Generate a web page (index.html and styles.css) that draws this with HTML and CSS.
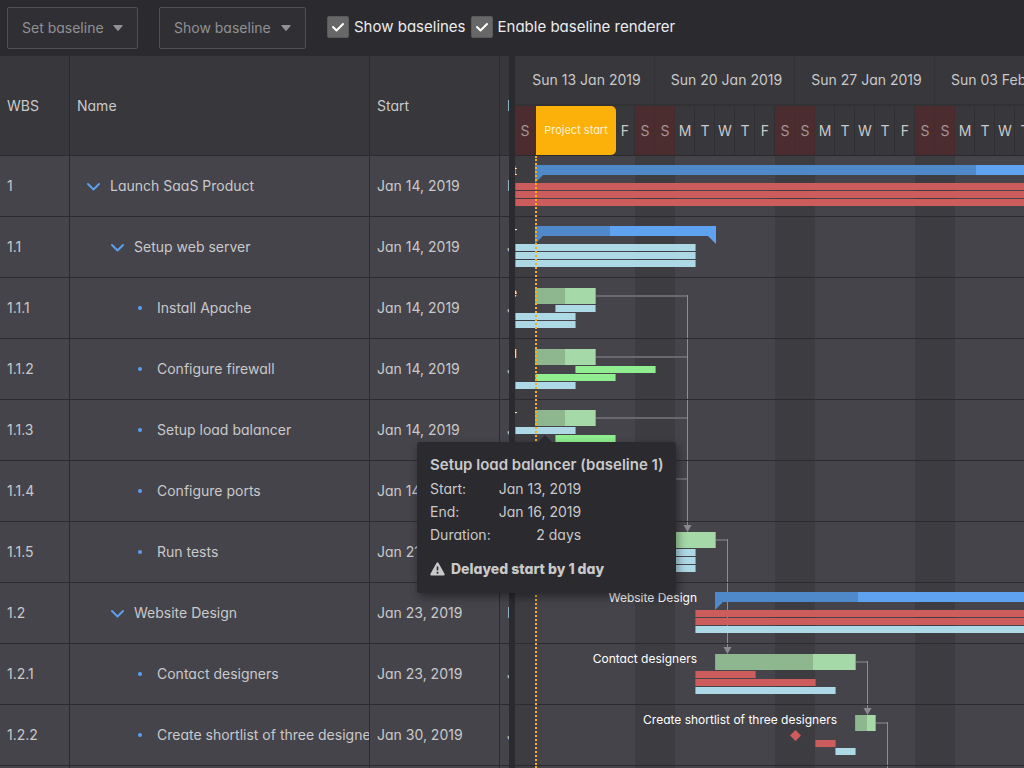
FILE: index.html
```html
<!DOCTYPE html>
<html lang="en">
<head>
<meta charset="utf-8">
<meta name="viewport" content="width=device-width, initial-scale=1">
<title>Gantt baselines</title>
<link rel="stylesheet" href="styles.css">
</head>
<body>
<header class="toolbar">
  <button class="btn" type="button">Set baseline <svg class="caret" viewBox="0 0 10 6" aria-hidden="true"><path d="M1 0h8q1 0 .5 1L5.700 5.500q-.7.700-1.400 0L.5 1Q0 0 1 0z"/></svg></button>
  <button class="btn btn-wide" type="button">Show baseline <svg class="caret" viewBox="0 0 10 6" aria-hidden="true"><path d="M1 0h8q1 0 .5 1L5.700 5.500q-.7.700-1.400 0L.5 1Q0 0 1 0z"/></svg></button>
  <div class="checks">
    <label class="check"><input type="checkbox" checked><svg class="tick" viewBox="0 0 22 22" aria-hidden="true"><path d="M6 11l3.500 3.500L16 8"/></svg><span>Show baselines</span></label>
    <label class="check"><input type="checkbox" checked><svg class="tick" viewBox="0 0 22 22" aria-hidden="true"><path d="M6 11l3.500 3.500L16 8"/></svg><span>Enable baseline renderer</span></label>
  </div>
</header>

<main class="gantt">
  <section class="grid-pane">
    <table class="grid">
      <colgroup><col class="col-wbs"><col class="col-name"><col class="col-date"><col class="col-date"></colgroup>
      <thead><tr><th>WBS</th><th>Name</th><th>Start</th><th>End</th></tr></thead>
      <tbody>
        <tr><td>1</td><td><div class="node l1"><svg class="chev" viewBox="0 0 16 16" aria-hidden="true"><path d="M2 6l5.500 5.500L13 6"/></svg>Launch SaaS Product</div></td><td>Jan 14, 2019</td><td>Mar 05, 2019</td></tr>
        <tr><td>1.1</td><td><div class="node l2"><svg class="chev" viewBox="0 0 16 16" aria-hidden="true"><path d="M2 6l5.500 5.500L13 6"/></svg>Setup web server</div></td><td>Jan 14, 2019</td><td>Jan 23, 2019</td></tr>
        <tr><td>1.1.1</td><td><div class="node l3"><i class="dot"></i>Install Apache</div></td><td>Jan 14, 2019</td><td>Jan 17, 2019</td></tr>
        <tr><td>1.1.2</td><td><div class="node l3"><i class="dot"></i>Configure firewall</div></td><td>Jan 14, 2019</td><td>Jan 17, 2019</td></tr>
        <tr><td>1.1.3</td><td><div class="node l3"><i class="dot"></i>Setup load balancer</div></td><td>Jan 14, 2019</td><td>Jan 17, 2019</td></tr>
        <tr><td>1.1.4</td><td><div class="node l3"><i class="dot"></i>Configure ports</div></td><td>Jan 14, 2019</td><td>Jan 16, 2019</td></tr>
        <tr><td>1.1.5</td><td><div class="node l3"><i class="dot"></i>Run tests</div></td><td>Jan 21, 2019</td><td>Jan 23, 2019</td></tr>
        <tr><td>1.2</td><td><div class="node l2"><svg class="chev" viewBox="0 0 16 16" aria-hidden="true"><path d="M2 6l5.500 5.500L13 6"/></svg>Website Design</div></td><td>Jan 23, 2019</td><td>Feb 13, 2019</td></tr>
        <tr><td>1.2.1</td><td><div class="node l3"><i class="dot"></i>Contact designers</div></td><td>Jan 23, 2019</td><td>Jan 30, 2019</td></tr>
        <tr><td>1.2.2</td><td><div class="node l3"><i class="dot"></i>Create shortlist of three designers</div></td><td>Jan 30, 2019</td><td>Jan 31, 2019</td></tr>
        <tr><td></td><td></td><td></td><td></td></tr>
      </tbody>
    </table>
  </section>

  <div class="splitter"></div>

  <section class="timeline">
    <div class="time-head">
      <div class="weeks"><span>Sun 13 Jan 2019</span><span>Sun 20 Jan 2019</span><span>Sun 27 Jan 2019</span><span>Sun 03 Feb 2019</span></div>
      <div class="days">
        <b>S</b><span>M</span><span>T</span><span>W</span><span>T</span><span>F</span><b>S</b>
        <b>S</b><span>M</span><span>T</span><span>W</span><span>T</span><span>F</span><b>S</b>
        <b>S</b><span>M</span><span>T</span><span>W</span><span>T</span><span>F</span><b>S</b>
        <b>S</b><span>M</span><span>T</span><span>W</span><span>T</span><span>F</span><b>S</b>
      </div>
      <div class="marker">Project start</div>
    </div>
    <div class="time-body">
      <svg class="links" width="600" height="620" aria-hidden="true">
        <path class="h" d="M80 140h93M80 201h93M80 262h93M80 323h93M200 384h13M340 506h13M360 567h13"/>
        <path class="v" d="M172.500 139v232M212.500 383v110M352.500 505v49M372.500 566v54"/>
        <path class="head" d="M168.500 369h8l-4 7zM208.500 491h8l-4 7zM348.500 552h8l-4 7z"/>
      </svg>
      <div class="row">
        <span class="label" style="--s:1">Launch SaaS Product</span>
        <div class="bar parent" style="--s:1;--d:50;--p:441px"></div>
        <div class="base b1 late" style="--s:0;--d:50"></div><div class="base b2 late" style="--s:0;--d:50"></div><div class="base b3 late" style="--s:0;--d:50"></div>
      </div>
      <div class="row">
        <span class="label" style="--s:1">Setup web server</span>
        <div class="bar parent" style="--s:1;--d:9;--p:75px"></div>
        <div class="base b1" style="--s:0;--d:9"></div><div class="base b2" style="--s:0;--d:9"></div><div class="base b3" style="--s:0;--d:9"></div>
      </div>
      <div class="row">
        <span class="label" style="--s:1">Install Apache</span>
        <div class="bar task" style="--s:1;--d:3;--p:30px"></div>
        <div class="base b1" style="--s:2;--d:2"></div><div class="base b2" style="--s:0;--d:3"></div><div class="base b3" style="--s:0;--d:3"></div>
      </div>
      <div class="row">
        <span class="label" style="--s:1">Configure firewall</span>
        <div class="bar task" style="--s:1;--d:3;--p:30px"></div>
        <div class="base b1 early" style="--s:3;--d:4"></div><div class="base b2 early" style="--s:1;--d:4"></div><div class="base b3" style="--s:0;--d:3"></div>
      </div>
      <div class="row">
        <span class="label" style="--s:1">Setup load balancer</span>
        <div class="bar task" style="--s:1;--d:3;--p:30px"></div>
        <div class="base b1" style="--s:0;--d:3"></div><div class="base b2 early" style="--s:2;--d:3"></div>
      </div>
      <div class="row">
        <div class="bar task" style="--s:1;--d:2;--p:20px"></div>
      </div>
      <div class="row">
        <div class="bar task" style="--s:7;--d:3;--p:0px"></div>
        <div class="base b1" style="--s:7;--d:2"></div><div class="base b2" style="--s:7;--d:2"></div><div class="base b3" style="--s:7;--d:2"></div>
      </div>
      <div class="row">
        <span class="label" style="--s:10">Website Design</span>
        <div class="bar parent" style="--s:10;--d:21;--p:143px"></div>
        <div class="base b1 late" style="--s:9;--d:21"></div><div class="base b2 late" style="--s:9;--d:21"></div><div class="base b3" style="--s:9;--d:21"></div>
      </div>
      <div class="row">
        <span class="label" style="--s:10">Contact designers</span>
        <div class="bar task" style="--s:10;--d:7;--p:98px"></div>
        <div class="base b1 late" style="--s:9;--d:3"></div><div class="base b2 late" style="--s:9;--d:6"></div><div class="base b3" style="--s:9;--d:7"></div>
      </div>
      <div class="row">
        <span class="label" style="--s:17">Create shortlist of three designers</span>
        <div class="bar task" style="--s:17;--d:1;--p:12px"></div>
        <div class="milestone" style="--s:14"></div><div class="base b2 late" style="--s:15;--d:1"></div><div class="base b3" style="--s:16;--d:1"></div>
      </div>
      <div class="start-line"></div>
    </div>
  </section>

  <aside class="tooltip" role="tooltip">
    <strong class="tip-title">Setup load balancer (baseline 1)</strong>
    <dl class="tip-data">
      <dt>Start:</dt><dd>Jan 13, 2019</dd>
      <dt>End:</dt><dd>Jan 16, 2019</dd>
      <dt>Duration:</dt><dd>2 days</dd>
    </dl>
    <strong class="tip-warn"><svg class="warn" viewBox="0 0 15 14" aria-hidden="true"><path d="M6.500 1q1-1.500 2 0l6 10.800q.7 1.500-1 1.700h-12q-1.700-.2-1-1.700z" fill="#c9c9ca"/><path d="M7.500 4.500v4" stroke="#2b2a2f" stroke-width="1.600"/><circle cx="7.500" cy="10.700" r="1" fill="#2b2a2f"/></svg>Delayed start by 1 day</strong>
  </aside>
</main>
</body>
</html>
```

FILE: styles.css
```css
* { box-sizing: border-box; }

body {
  margin: 0;
  height: 100vh;
  display: flex;
  flex-direction: column;
  overflow: hidden;
  background: #45444a;
  color: #c9c9ca;
  font: 400 14px/20px Inter, "Noto Sans", sans-serif;
  font-feature-settings: "cv11";
}

/* Toolbar */
.toolbar {
  flex: none;
  display: flex;
  align-items: center;
  gap: 21px;
  height: 56px;
  padding: 0 7px;
  background: #2b2a2f;
}
.btn {
  display: flex;
  align-items: center;
  justify-content: space-between;
  gap: 7px;
  min-width: 131px;
  height: 42px;
  padding: 0 14px;
  border: 1px solid #4f4e53;
  border-radius: 2px;
  background: #302f34;
  color: #919193;
  font: inherit;
  font-feature-settings: inherit;
  white-space: nowrap;
}
.btn-wide { min-width: 147px; }
.caret { width: 10px; height: 6px; fill: #919193; }
.checks { display: flex; gap: 5px; padding-bottom: 2px; font-size: 15px; }
.check {
  position: relative;
  display: flex;
  align-items: center;
  gap: 5px;
  color: #ececec;
  white-space: nowrap;
}
.check input {
  appearance: none;
  width: 22px;
  height: 22px;
  margin: 0;
  border: 1px solid #5a5a5c;
  border-radius: 2px;
  background: #676768;
}
.tick {
  position: absolute;
  left: 0;
  width: 22px;
  height: 22px;
  fill: none;
  stroke: #fff;
  stroke-width: 2;
  stroke-linecap: round;
  stroke-linejoin: round;
  visibility: hidden;
}
.check input:checked + .tick { visibility: visible; }

/* Split view */
.gantt { position: relative; flex: 1; min-height: 0; display: flex; }
.grid-pane { flex: 0 0 509px; overflow: hidden; }
.splitter { flex: 0 0 6px; background: #2b2a2f; }
.timeline { flex: 1; min-width: 0; display: flex; flex-direction: column; overflow: hidden; }

/* Grid */
.grid { width: 630px; table-layout: fixed; border-spacing: 0; }
.col-wbs { width: 70px; }
.col-name { width: 300px; }
.col-date { width: 130px; }
.grid th, .grid td {
  height: 61px;
  padding: 0 0 0 7px;
  border: solid #2b2a2f;
  border-width: 0 1px 1px 0;
  text-align: left;
  font-weight: 400;
  white-space: nowrap;
  overflow: hidden;
}
.grid th { height: 100px; background: #38373b; }
.node { display: flex; align-items: center; gap: 8px; }
.l1 { padding-left: 9px; }
.l2 { padding-left: 33px; }
.l3 { padding-left: 56px; }
.chev { flex: none; width: 16px; height: 16px; fill: none; stroke: #5c9fec; stroke-width: 2; stroke-linecap: round; stroke-linejoin: round; }
.dot { flex: none; width: 4px; height: 4px; margin: 0 7px 0 5px; border-radius: 50%; background: #5c9fec; }

/* Time axis */
.time-head {
  position: relative;
  flex: none;
  height: 100px;
  border-bottom: 1px solid #2b2a2f;
  background: #38373b;
}
.weeks, .days { display: flex; }
.weeks span {
  flex: 0 0 140px;
  padding-left: 4px;
  border: solid #323136;
  border-width: 0 1px 2px 0;
  line-height: 48px;
  text-align: center;
}
.days > * {
  flex: 0 0 20px;
  padding-left: 1px;
  border-right: 1px solid #302f34;
  line-height: 49px;
  text-align: center;
  font-weight: 400;
}
.days b { background: #4b2d30; color: #a59395; border-color: #472a2d; }
.marker {
  position: absolute;
  left: 21px;
  top: 50px;
  min-width: 80px;
  height: 49px;
  padding: 0 7px;
  border-radius: 0 5px 5px 0;
  background: #fcb00a;
  color: #fdf0cd;
  font-size: 11px;
  line-height: 49px;
  text-align: center;
  white-space: nowrap;
}

/* Chart canvas: one day is 20px wide */
.time-body {
  position: relative;
  flex: 1;
  min-height: 0;
  overflow: hidden;
  background: repeating-linear-gradient(90deg, #3d3c40 0 20px, #45444a 20px 120px, #3d3c40 120px 140px);
}
.links { position: absolute; left: 0; top: 0; fill: none; }
.links .h { stroke: #69686c; stroke-width: 2; }
.links .v { stroke: #8e8e90; }
.links .head { fill: #8a8a8c; }
.row { position: relative; height: 61px; border-bottom: 1px solid #2b2a2f; }
.bar, .base {
  position: absolute;
  left: calc(var(--s) * 20px);
  width: calc(var(--d) * 20px + 1px);
}
.parent {
  top: 9px;
  height: 18px;
  background: linear-gradient(90deg, #4f89c9 var(--p), #5ea2f0 var(--p));
  clip-path: polygon(0 0, 100% 0, 100% 18px, calc(100% - 8px) 10px, 8px 10px, 0 18px);
}
.task {
  top: 10px;
  height: 16px;
  background: linear-gradient(90deg, #8eb78f var(--p), #a5d9a7 var(--p));
  box-shadow: inset -1px 0 #85a987, inset 1px 0 #85a987;
}
.base {
  height: 7px;
  background: #add8e6;
  box-shadow: inset -1px 0 #7f9aa5, inset 1px 0 #7f9aa5;
}
.b1 { top: 27px; }
.b2 { top: 35px; }
.b3 { top: 43px; }
.late { background: #cd5c5c; box-shadow: inset -1px 0 #9b5256, inset 1px 0 #9b5256; }
.early { background: #90ee90; box-shadow: inset -1px 0 #70a572, inset 1px 0 #70a572; }
.milestone {
  position: absolute;
  left: calc(var(--s) * 20px - 5px);
  top: 25px;
  width: 11px;
  height: 11px;
  clip-path: polygon(50% 0, 100% 50%, 50% 100%, 0 50%);
  background: #cd5c5c;
}
.label {
  position: absolute;
  right: calc(100% - var(--s) * 20px + 18px);
  top: 5px;
  color: #fff;
  font-size: 12px;
  white-space: nowrap;
}
.start-line {
  position: absolute;
  left: 20px;
  top: 0;
  bottom: 0;
  border-left: 2px dotted #fcb00a;
}

/* Tooltip */
.tooltip {
  position: absolute;
  left: 417px;
  top: 386px;
  width: 259px;
  padding: 13px 13px 14px;
  border-radius: 3px;
  background: #2b2a2f;
  box-shadow: 2px 4px 10px rgba(0, 0, 0, .4);
}
.tooltip::before {
  content: "";
  position: absolute;
  left: 121px;
  top: -7px;
  border: solid transparent;
  border-width: 0 7px 7px;
  border-bottom-color: #2b2a2f;
}
.tip-title { display: block; font-size: 15px; font-weight: 600; white-space: nowrap; }
.tip-data {
  display: grid;
  grid-template-columns: auto auto;
  justify-content: start;
  column-gap: 8px;
  margin: 2px 0 13px;
  line-height: 23px;
}
.tip-data dd { margin: 0; text-align: right; }
.tip-warn { display: flex; align-items: center; gap: 6px; font-weight: 800; white-space: nowrap; }
.warn { width: 15px; height: 14px; }
```
